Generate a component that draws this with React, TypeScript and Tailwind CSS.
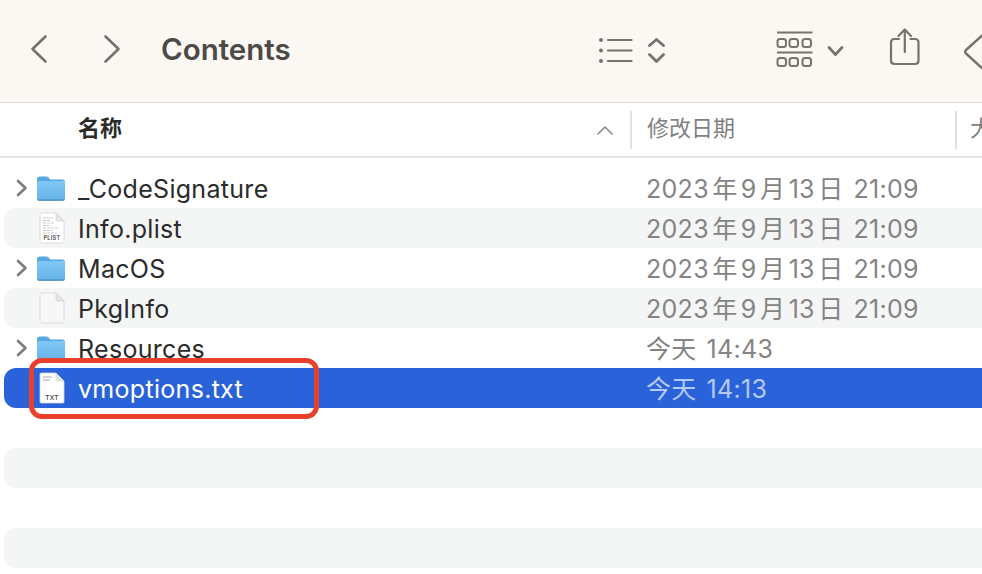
const FONT = "font-['Inter','Noto_Sans_CJK_SC',sans-serif]";

type Kind = "folder" | "plist" | "blank" | "txt";

const rows: { name: string; day: string; time: string; kind: Kind }[] = [
  { name: "_CodeSignature", day: "2023 年 9 月 13 日", time: "21:09", kind: "folder" },
  { name: "Info.plist", day: "2023 年 9 月 13 日", time: "21:09", kind: "plist" },
  { name: "MacOS", day: "2023 年 9 月 13 日", time: "21:09", kind: "folder" },
  { name: "PkgInfo", day: "2023 年 9 月 13 日", time: "21:09", kind: "blank" },
  { name: "Resources", day: "今天", time: "14:43", kind: "folder" },
  { name: "vmoptions.txt", day: "今天", time: "14:13", kind: "txt" },
];

function FolderIcon() {
  return (
    <svg width="30" height="28" viewBox="0 0 30 28" className="shrink-0">
      <defs>
        <linearGradient id="folderBody" x1="0" y1="0" x2="0" y2="1">
          <stop offset="0" stopColor="#80c6f3" />
          <stop offset="1" stopColor="#66b2ea" />
        </linearGradient>
      </defs>
      <path d="M1 5.5C1 3.5 2 2.5 4 2.5H10C11.5 2.5 12 3 13 4L14.5 5.5H26C28 5.5 29 6.5 29 8.5V10H1Z" fill="#58a6e2" />
      <path d="M1 9C1 7.8 1.8 7 3 7H27C28.2 7 29 7.8 29 9V24C29 25.5 28 26.5 26.5 26.5H3.5C2 26.5 1 25.5 1 24Z" fill="url(#folderBody)" />
      <path d="M1 25H29V25C29 26 28 27 26.5 27H3.5C2 27 1 26 1 25Z" fill="#5b9ed2" />
    </svg>
  );
}

function DocIcon({ kind }: { kind: Kind }) {
  return (
    <svg width="26" height="32" viewBox="0 0 26 32" className="shrink-0">
      <path d="M2.5 1H17L25 9V29.5C25 30.5 24.5 31 23.5 31H2.5C1.5 31 1 30.5 1 29.5V2.5C1 1.5 1.5 1 2.5 1Z" fill={kind === "blank" ? "#f7f7f7" : "#ffffff"} stroke="#d6d6d6" strokeWidth="0.8" />
      <path d="M17 1V7.5C17 8.5 17.5 9 18.5 9H25Z" fill="#e4e4e4" stroke="#d0d0d0" strokeWidth="0.6" />
      {kind === "plist" && (
        <>
          <path d="M4 6H14M4 8.5H12M4 11H15M4 13.5H10M4 16H20M4 18.5H14M4 21H18" stroke="#c9c9c9" strokeWidth="1" strokeDasharray="3 1" />
          <text x="13" y="28" textAnchor="middle" fontSize="5.5" fontWeight="700" fill="#666" fontFamily="Inter, sans-serif">PLIST</text>
        </>
      )}
      {kind === "txt" && (
        <>
          <path d="M4 5H13M4 8H11" stroke="#a8a8a8" strokeWidth="1" />
          <text x="13" y="27.5" textAnchor="middle" fontSize="6.5" fontWeight="500" fill="#444" fontFamily="Inter, sans-serif">TXT</text>
        </>
      )}
    </svg>
  );
}

function BackIcon({ flip }: { flip?: boolean }) {
  return (
    <svg width="18" height="30" viewBox="0 0 18 30" className={flip ? "rotate-180" : ""}>
      <path d="M15.5 2.5L2.5 15L15.5 27.5" fill="none" stroke="#76726d" strokeWidth="2.6" strokeLinecap="round" strokeLinejoin="round" />
    </svg>
  );
}

function ListIcon() {
  return (
    <svg width="70" height="26" viewBox="0 0 70 26" className="shrink-0">
      <circle cx="3" cy="3" r="2" fill="#76726d" />
      <circle cx="3" cy="13.5" r="2" fill="#76726d" />
      <circle cx="3" cy="24" r="2" fill="#76726d" />
      <path d="M10 3H33.5M10 13.5H33.5M10 24H33.5" stroke="#76726d" strokeWidth="2.2" strokeLinecap="round" />
      <path d="M51.5 8.5L58.5 2.5L65.5 8.5M51.5 17.5L58.5 24.5L65.5 17.5" fill="none" stroke="#76726d" strokeWidth="2.8" strokeLinecap="round" strokeLinejoin="round" />
    </svg>
  );
}

function GridIcon() {
  return (
    <svg width="70" height="36" viewBox="0 0 70 36" className="shrink-0">
      <g fill="none" stroke="#76726d" strokeWidth="2">
        <path d="M1 1.5H36.5M1 21.5H36.5" strokeWidth="2.2" />
        {[1.5, 13.5, 26.5].map((x) => (
          <g key={x}>
            <rect x={x} y="8" width="8.5" height="8" rx="2.5" />
            <rect x={x} y="27" width="8.5" height="8" rx="2.5" />
          </g>
        ))}
      </g>
      <path d="M53 16.5L59.5 23.5L66 16.5" fill="none" stroke="#76726d" strokeWidth="2.8" strokeLinecap="round" strokeLinejoin="round" />
    </svg>
  );
}

function ShareIcon() {
  return (
    <svg width="32" height="38" viewBox="0 0 32 38" className="shrink-0">
      <path d="M10 11H5.5C3 11 2 12 2 14.5V32.5C2 35 3 36 5.5 36H26C28.5 36 29.5 35 29.5 32.5V14.5C29.5 12 28.5 11 26 11H21.5" fill="none" stroke="#76726d" strokeWidth="2.2" strokeLinecap="round" />
      <path d="M15.8 24V2M9.5 8L15.8 1.5L22 8" fill="none" stroke="#76726d" strokeWidth="2.2" strokeLinecap="round" strokeLinejoin="round" />
    </svg>
  );
}

function TagIcon() {
  return (
    <svg width="30" height="44" viewBox="0 0 30 44" className="shrink-0">
      <path d="M22 3L3 20C2 21 2 22.5 3 23.5L22 41" fill="none" stroke="#76726d" strokeWidth="2.4" strokeLinecap="round" strokeLinejoin="round" />
    </svg>
  );
}

function Chevron() {
  return (
    <svg width="12" height="18" viewBox="0 0 12 18">
      <path d="M2 2L9.5 9L2 16" fill="none" stroke="#7d7d7d" strokeWidth="2.6" strokeLinecap="round" strokeLinejoin="round" />
    </svg>
  );
}

export default function App() {
  return (
    <div className={`relative h-[574px] w-[982px] overflow-hidden bg-white ${FONT}`}>
      {/* Toolbar */}
      <div className="flex h-[103px] items-center overflow-hidden border-b border-[#dcdbd9] bg-[#fbf8f4]">
        <div className="mb-[5px] ml-[30px] flex shrink-0"><BackIcon /></div>
        <div className="mb-[5px] ml-[55px] flex shrink-0"><BackIcon flip /></div>
        <div className="mb-[3px] ml-[40px] w-[437px] shrink-0 text-[29.5px] leading-none font-semibold text-[#4b4a48]">Contents</div>
        <div className="mb-[3px] flex shrink-0"><ListIcon /></div>
        <div className="mb-[5px] ml-[108px] flex shrink-0"><GridIcon /></div>
        <div className="mb-[8px] ml-[43px] flex shrink-0"><ShareIcon /></div>
        <div className="mt-[2px] ml-[42px] flex shrink-0"><TagIcon /></div>
      </div>

      {/* Column headers */}
      <div className="flex h-[55px] items-center overflow-hidden border-b-2 border-[#e5e5e5] text-[22px] leading-none whitespace-nowrap">
        <div className="mb-[3px] ml-[78px] w-[519px] shrink-0 font-semibold text-[#2b2b2b]">名称</div>
        <svg width="16" height="10" viewBox="0 0 16 10" className="shrink-0">
          <path d="M1 9L8 2L15 9" fill="none" stroke="#8a8a8a" strokeWidth="1.6" strokeLinecap="round" strokeLinejoin="round" />
        </svg>
        <div className="ml-[17px] h-[38px] w-[2px] shrink-0 bg-[#e2e2e2]" />
        <div className="mb-[3px] ml-[15px] w-[308px] shrink-0 text-[#7f7f7f]">修改日期</div>
        <div className="h-[38px] w-[2px] shrink-0 bg-[#e2e2e2]" />
        <div className="mb-[3px] ml-[13px] shrink-0 text-[#7f7f7f]">大小</div>
      </div>

      {/* File rows */}
      <div className="mt-[10px] flex flex-col pl-[4px]">
        {rows.map((row, i) => {
          const selected = row.name === "vmoptions.txt";
          const isFolder = row.kind === "folder";
          const bg = selected ? "bg-[#2a63d9]" : i % 2 === 1 ? "bg-[#f4f5f5]" : "";
          return (
            <div key={row.name} className={`flex h-10 items-center rounded-l-[12px] text-[25px] leading-none tracking-[0.3px] ${bg}`}>
              <div className="ml-[12px] flex w-[20px] shrink-0 items-center">{isFolder && <Chevron />}</div>
              <div className="flex w-[42px] shrink-0 items-center">
                {isFolder ? <FolderIcon /> : <div className="ml-[3px] flex"><DocIcon kind={row.kind} /></div>}
              </div>
              <div className={`w-[568px] shrink-0 pt-[2px] ${selected ? "text-white" : "text-[#2b2b2b]"}`}>{row.name}</div>
              <div className={`flex shrink-0 pt-[2px] whitespace-nowrap ${selected ? "text-[#b4c9f3]" : "text-[#848484]"}`}>
                <span className="[word-spacing:-4px]">{row.day}</span>
                <span className="ml-[10px]">{row.time}</span>
              </div>
            </div>
          );
        })}
        <div className="h-10" />
        <div className="h-10 rounded-l-[12px] bg-[#f4f5f5]" />
        <div className="h-10" />
        <div className="h-10 rounded-l-[12px] bg-[#f4f5f5]" />
      </div>

      {/* Red annotation */}
      <div className="absolute top-[358px] left-[29px] h-[61px] w-[290px] rounded-[13px] border-[5px] border-[#e8402a]" />
    </div>
  );
}
